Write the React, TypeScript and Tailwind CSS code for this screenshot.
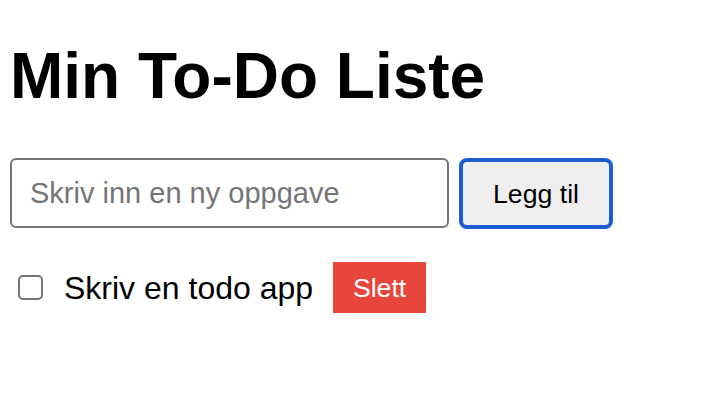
import React from "react";

export default function App() {
  return (
    <div className="min-h-[402px] bg-white px-[10px] pt-[44px]" style={{ fontFamily: '"Liberation Sans", Arial, sans-serif' }}>
      <h1 className="m-0 text-[64px] font-bold leading-none text-black">Min To-Do Liste</h1>
      <div className="mt-[50px] flex items-stretch gap-[10px]">
        <input
          type="text"
          placeholder="Skriv inn en ny oppgave"
          className="box-border h-[70px] w-[439px] rounded-[6px] border-2 border-[#767676] bg-white pl-[18px] text-[29px] text-black outline-none placeholder:text-[#757575]"
        />
        <button className="box-border h-[71px] w-[154px] rounded-[8px] border-[4px] border-[#1a5fd2] bg-[#efefef] text-[26.67px] text-black">
          Legg til
        </button>
      </div>
      <ul className="m-0 mt-[33px] flex list-none items-center p-0">
        <li className="flex items-center">
          <span className="ml-[8px] box-border block h-[25px] w-[25px] rounded-[5px] border-2 border-[#767676] bg-white" />
          <span className="ml-[21px] text-[32px] leading-none text-black">Skriv en todo app</span>
          <button className="ml-[20px] box-border h-[51px] w-[93px] bg-[#e8453d] text-[26.67px] text-white">
            Slett
          </button>
        </li>
      </ul>
    </div>
  );
}
